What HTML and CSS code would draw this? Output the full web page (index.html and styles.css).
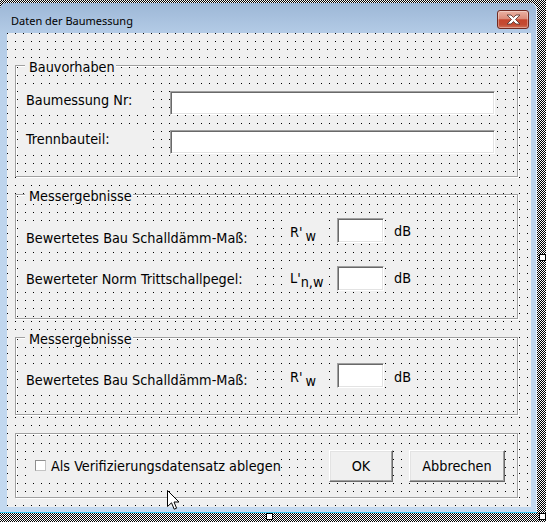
FILE: index.html
```html
<!DOCTYPE html>
<html lang="de">
<head>
<meta charset="utf-8">
<title>Daten der Baumessung</title>
<link rel="stylesheet" href="styles.css">
</head>
<body>
<div class="window">
  <div class="titlebar">
    <span class="title">Daten der Baumessung</span>
    <div class="close">
      <svg width="15" height="11" viewBox="0 0 15 11"><path d="M1,1 H5 L7.5,3.5 L10,1 H14 L9.5,5.5 L14,10 H10 L7.5,7.5 L5,10 H1 L5.5,5.5 Z" fill="#fff" stroke="#5b3a36" stroke-width="0.9" stroke-linejoin="round"/></svg>
    </div>
  </div>
  <div class="client">
    <div class="frame frame-bau">
      <div class="caption">Bauvorhaben</div>
      <div class="row row-text row-a">
        <div class="lbl lbl-a">Baumessung Nr:</div>
        <div class="tb tb-wide"></div>
      </div>
      <div class="row row-text row-b">
        <div class="lbl lbl-a">Trennbauteil:</div>
        <div class="tb tb-wide"></div>
      </div>
    </div>

    <div class="frame frame-mess">
      <div class="caption">Messergebnisse</div>
      <div class="row row-val row-1">
        <div class="lbl lbl-b">Bewertetes Bau Schalldämm-Maß:</div>
        <div class="lbl sym">R'<span class="sub sub-r">w</span></div>
        <div class="tb tb-small"></div>
        <div class="lbl unit">dB</div>
      </div>
      <div class="row row-val row-2">
        <div class="lbl lbl-b">Bewerteter Norm Trittschallpegel:</div>
        <div class="lbl sym">L'<span class="sub">n,w</span></div>
        <div class="tb tb-small"></div>
        <div class="lbl unit">dB</div>
      </div>
    </div>

    <div class="frame frame-mess2">
      <div class="caption">Messergebnisse</div>
      <div class="row row-val row-3">
        <div class="lbl lbl-b">Bewertetes Bau Schalldämm-Maß:</div>
        <div class="lbl sym">R'<span class="sub sub-r">w</span></div>
        <div class="tb tb-small"></div>
        <div class="lbl unit">dB</div>
      </div>
    </div>

    <div class="frame frame-actions">
      <div class="row row-actions">
        <div class="cbctl">
          <div class="cbbox"></div>
          <span class="cbtext">Als Verifizierungsdatensatz ablegen</span>
        </div>
        <div class="btn btn-ok">OK</div>
        <div class="btn btn-cancel">Abbrechen</div>
      </div>
    </div>
  </div>
</div>

<div class="handle handle-bottom"></div>
<div class="handle handle-corner"></div>
<div class="handle handle-right"></div>

<svg class="cursor" width="13" height="21" viewBox="0 0 13 21"><path d="M0.5,0.5 L0.5,16.5 L4.5,12.8 L7.2,19.2 L9.6,18.2 L7,12 L12,12 Z" fill="#fff" stroke="#000" stroke-width="1" stroke-linejoin="miter"/></svg>
</body>
</html>
```

FILE: styles.css
```css
* { box-sizing: border-box; }

html, body { margin: 0; }

body {
  width: 546px;
  height: 522px;
  overflow: hidden;
  position: relative;
  background: repeating-conic-gradient(#000 0 25%, #fff 0 50%) 0 0 / 2px 2px;
  font-family: "DejaVu Sans Condensed", "Liberation Sans", sans-serif;
  font-size: 14.3px;
  color: #000;
}

.window {
  margin-top: 3px;
  width: 537px;
  height: 510px;
  display: flex;
  flex-direction: column;
  background: linear-gradient(#9db7d6 0, #b3cbe6 30px, #bcd3ec 90px, #c3d9f0 100%);
  border-bottom: 1px solid #3cc6ec;
  border-radius: 6px 6px 0 0;
  box-shadow: inset -1px 0 0 #e4eef9;
}

.titlebar {
  flex: none;
  height: 30px;
  display: flex;
  align-items: flex-start;
  padding-left: 11px;
}

.title {
  font-family: "Noto Sans", "Liberation Sans", sans-serif;
  font-size: 11px;
  line-height: 14px;
  margin-top: 11px;
  color: #000;
}

.close {
  margin-left: auto;
  margin-right: 8px;
  margin-top: 7px;
  width: 32px;
  height: 19px;
  border: 1px solid #6f2a22;
  border-radius: 3px;
  background: linear-gradient(#eab2a4 0, #dc8c7a 45%, #c5452d 52%, #c44c33 80%, #d0715a 100%);
  box-shadow: inset 0 0 0 1px rgba(255, 255, 255, 0.35);
  display: flex;
  align-items: center;
  justify-content: center;
}

.close svg { display: block; }

.client {
  flex: none;
  height: 474px;
  margin: 0 6px 0 7px;
  padding: 32px 13px 0 8px;
  background-color: #f0f0f0;
  background-image:
    linear-gradient(to right, transparent 1px, #f0f0f0 1px),
    linear-gradient(#000 1px, transparent 1px);
  background-size: 8px 8px;
}

.frame {
  width: 503px;
  border: 1px solid #a0a0a0;
  box-shadow: inset 1px 1px 0 #fff, 1px 1px 0 #fff;
  background-color: #f0f0f0;
  background-image:
    linear-gradient(to right, transparent 1px, #f0f0f0 1px),
    linear-gradient(#000 1px, transparent 1px);
  background-size: 8px 8px;
  background-position: 1px 1px;
}

.frame-bau { padding-bottom: 22px; }
.frame-mess { margin-top: 17px; padding-bottom: 27px; }
.frame-mess2 { margin-top: 18px; padding-bottom: 26px; }
.frame-actions { margin-top: 18px; padding-bottom: 15px; }

.caption {
  width: fit-content;
  height: 16px;
  line-height: 16px;
  margin: -7px 0 0 9px;
  padding: 0 1px 0 4px;
  background: #f0f0f0;
  white-space: nowrap;
}

.row {
  display: flex;
  align-items: flex-start;
}

.lbl {
  background: #f0f0f0;
  line-height: 16px;
  padding: 4px 0 0 2px;
  white-space: nowrap;
}

/* Bauvorhaben rows */
.row-text { height: 24px; }
.row-a { margin-top: 16px; }
.row-b { margin-top: 15px; }

.lbl-a {
  margin-left: 8px;
  margin-top: -3px;
  width: 128px;
  height: 23px;
}

.tb {
  background: #fff;
  border: 1px solid;
  border-color: #a0a0a0 #fff #fff #a0a0a0;
  box-shadow: inset 1px 1px 0 #696969, inset -1px -1px 0 #e3e3e3;
  flex: none;
}

.tb-wide {
  margin-left: 18px;
  width: 325px;
  height: 24px;
}

/* Messergebnisse rows */
.row-val { height: 25px; }
.row-1 { margin-top: 14px; }
.row-2 { margin-top: 23px; }
.row-3 { margin-top: 16px; }

.lbl-b {
  margin-left: 8px;
  width: 226px;
  height: 22px;
}

.sym {
  margin-left: 36px;
  width: 38px;
  height: 24px;
  padding-left: 4px;
}

.sub {
  vertical-align: -4px;
  font-size: inherit;
}

.sub-r { margin-left: 3px; }

.tb-small {
  margin-left: 13px;
  width: 47px;
  height: 25px;
}

.unit {
  margin-left: 7px;
  width: 24px;
  height: 24px;
  padding-left: 3px;
}

.row-1 .lbl-b { margin-top: 8px; }
.row-1 .sym { margin-top: 2px; }
.row-1 .unit { margin-top: 1px; }

.row-2 .lbl-b { margin-top: 1px; }
.row-2 .sym { margin-top: 0; }
.row-2 .unit { margin-top: 0; }

.row-3 .lbl-b { margin-top: 5px; }
.row-3 .sym { margin-top: 2px; }
.row-3 .unit { margin-top: 2px; }

/* Action row */
.row-actions {
  margin-top: 16px;
  height: 32px;
}

.cbctl {
  margin-left: 14px;
  margin-top: 5px;
  width: 250px;
  height: 22px;
  display: flex;
  align-items: flex-start;
  padding: 3px 0 0 5px;
  background: #f0f0f0;
}

.cbbox {
  flex: none;
  width: 11px;
  height: 11px;
  margin-top: 2px;
  background: #fff;
  border: 1px solid;
  border-color: #8e8e8e #c4c4c4 #c4c4c4 #8e8e8e;
}

.cbtext {
  margin-left: 5px;
  line-height: 16px;
  white-space: nowrap;
}

.btn {
  flex: none;
  height: 32px;
  line-height: 30px;
  text-align: center;
  background: #f0f0f0;
  border: 1px solid;
  border-color: #fff #696969 #696969 #fff;
  box-shadow: inset -1px -1px 0 #a0a0a0, inset 1px 1px 0 #e3e3e3;
}

.btn-ok {
  margin-left: 49px;
  width: 64px;
}

.btn-cancel {
  margin-left: 16px;
  width: 96px;
}

/* Selection handles (overlay) */
.handle {
  position: absolute;
  width: 7px;
  height: 7px;
  background: #fff;
  border: 1px solid #000;
}

.handle-bottom { left: 266px; top: 513px; }
.handle-corner { left: 539px; top: 513px; }
.handle-right { left: 539px; top: 254px; }

.cursor {
  position: absolute;
  left: 167px;
  top: 490px;
}
```
